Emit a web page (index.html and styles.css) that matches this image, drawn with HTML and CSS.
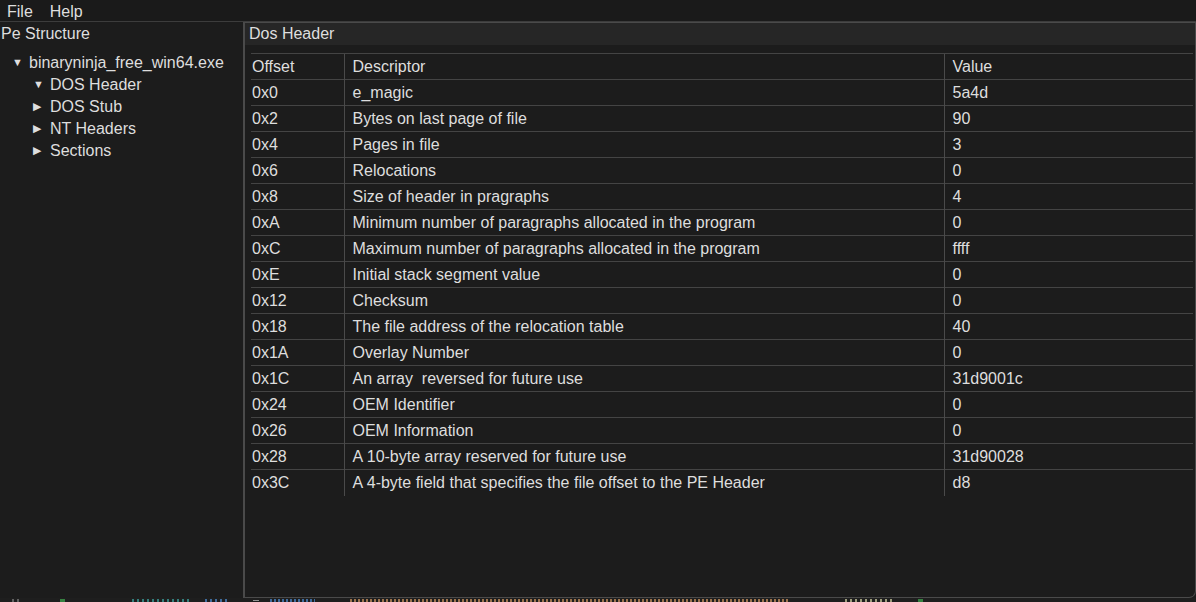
FILE: index.html
```html
<!DOCTYPE html>
<html>
<head>
<meta charset="utf-8">
<link rel="stylesheet" href="styles.css">
</head>
<body>
<div class="app">
  <div class="menubar">
    <span class="menu-item">File</span>
    <span class="menu-item">Help</span>
  </div>
  <div class="main">
    <div class="left-panel">
      <div class="left-title">Pe Structure</div>
      <ul class="tree">
        <li class="node open"><span class="arrow">▼</span>binaryninja_free_win64.exe
          <ul class="tree sub">
            <li class="node open"><span class="arrow">▼</span>DOS Header</li>
            <li class="node"><span class="arrow">▶</span>DOS Stub</li>
            <li class="node"><span class="arrow">▶</span>NT Headers</li>
            <li class="node"><span class="arrow">▶</span>Sections</li>
          </ul>
        </li>
      </ul>
    </div>
    <div class="window">
      <div class="win-title">Dos Header</div>
      <div class="win-body">
        <table class="grid">
          <colgroup><col class="c1"><col class="c2"><col class="c3"></colgroup>
          <thead>
            <tr><th>Offset</th><th>Descriptor</th><th>Value</th></tr>
          </thead>
          <tbody>
            <tr><td>0x0</td><td>e_magic</td><td>5a4d</td></tr>
            <tr><td>0x2</td><td>Bytes on last page of file</td><td>90</td></tr>
            <tr><td>0x4</td><td>Pages in file</td><td>3</td></tr>
            <tr><td>0x6</td><td>Relocations</td><td>0</td></tr>
            <tr><td>0x8</td><td>Size of header in pragraphs</td><td>4</td></tr>
            <tr><td>0xA</td><td>Minimum number of paragraphs allocated in the program</td><td>0</td></tr>
            <tr><td>0xC</td><td>Maximum number of paragraphs allocated in the program</td><td>ffff</td></tr>
            <tr><td>0xE</td><td>Initial stack segment value</td><td>0</td></tr>
            <tr><td>0x12</td><td>Checksum</td><td>0</td></tr>
            <tr><td>0x18</td><td>The file address of the relocation table</td><td>40</td></tr>
            <tr><td>0x1A</td><td>Overlay Number</td><td>0</td></tr>
            <tr><td>0x1C</td><td>An array&nbsp; reversed for future use</td><td>31d9001c</td></tr>
            <tr><td>0x24</td><td>OEM Identifier</td><td>0</td></tr>
            <tr><td>0x26</td><td>OEM Information</td><td>0</td></tr>
            <tr><td>0x28</td><td>A 10-byte array reserved for future use</td><td>31d90028</td></tr>
            <tr class="last"><td>0x3C</td><td>A 4-byte field that specifies the file offset to the PE Header</td><td>d8</td></tr>
          </tbody>
        </table>
      </div>
    </div>
  </div>
  <div class="underlay">
    <span class="frag g1"></span><span class="frag g2"></span><span class="frag g3"></span><span class="frag g4"></span><span class="frag g5"></span><span class="frag g6"></span><span class="frag g7"></span><span class="frag g8"></span><span class="frag g9"></span>
  </div>
</div>
</body>
</html>
```
FILE: styles.css
```css
* { box-sizing: border-box; }
html, body {
  margin: 0;
  padding: 0;
  background: #1c1c1c;
  width: 1196px;
  height: 602px;
  overflow: hidden;
}
body {
  font-family: "Liberation Sans", Arial, sans-serif;
  font-size: 16px;
  color: #dedede;
}
.app {
  display: flex;
  flex-direction: column;
  height: 602px;
}
.menubar {
  height: 22px;
  display: flex;
  gap: 17px;
  padding-left: 7px;
  padding-top: 2px;
  align-items: center;
  background: #1a1a1a;
  border-bottom: 1px solid #3c3c3c;
  line-height: 20px;
}
.main {
  flex: 1;
  display: flex;
  min-height: 0;
}
.left-panel {
  width: 245px;
  border-right: 2px solid #4a4a4a;
  background: #1c1c1c;
}
.left-title {
  height: 22px;
  line-height: 24px;
  padding-left: 1px;
}
.tree {
  list-style: none;
  margin: 0;
  padding: 0;
}
.left-panel > .tree {
  padding-left: 12px;
  padding-top: 8px;
}
.tree.sub {
  padding-left: 21px;
}
.node {
  line-height: 22px;
}
.arrow {
  display: inline-block;
  width: 17px;
  font-size: 11px;
  vertical-align: top;
  line-height: 21px;
}
.window {
  flex: 1;
  border: 1px solid #4a4a4a;
  border-left: none;
  border-radius: 0 0 7px 0;
  background: #1c1c1c;
  display: flex;
  flex-direction: column;
  overflow: hidden;
}
.win-title {
  height: 22px;
  line-height: 22px;
  padding-left: 4px;
  background: #262626;
}
.win-body {
  padding: 8px 0 0 6px;
}
.grid {
  border-collapse: collapse;
  width: 942px;
  table-layout: fixed;
}
.c1 { width: 93px; }
.c2 { width: 600px; }
.c3 { width: 249px; }
.grid th, .grid td {
  font-weight: normal;
  text-align: left;
  height: 26px;
  padding: 0 0 0 8px;
  border-top: 1px solid #444;
  border-left: 1px solid #4a4a4a;
  white-space: nowrap;
  vertical-align: middle;
}
.grid th:first-child, .grid td:first-child {
  border-left: none;
  padding-left: 1px;
}
.underlay {
  height: 4px;
  position: relative;
  background: #1e1e1e;
  overflow: hidden;
}
.frag {
  position: absolute;
  top: 1px;
  height: 3px;
  opacity: 0.75;
}
.g1 { left: 12px; width: 10px; background: repeating-linear-gradient(90deg, #777 0 2px, transparent 2px 5px); }
.g2 { left: 60px; width: 5px; background: #3fa34d; }
.g3 { left: 132px; width: 60px; background: repeating-linear-gradient(90deg, #3a9e9a 0 2px, transparent 2px 5px); }
.g4 { left: 205px; width: 25px; background: repeating-linear-gradient(90deg, #4a86c8 0 2px, transparent 2px 5px); }
.g5 { left: 253px; width: 6px; background: #bbb; height: 1px; top: 2px; }
.g6 { left: 270px; width: 45px; background: repeating-linear-gradient(90deg, #4a86c8 0 2px, transparent 2px 4px); }
.g7 { left: 350px; width: 440px; background: repeating-linear-gradient(90deg, #c8915d 0 2px, transparent 2px 4px); }
.g8 { left: 845px; width: 50px; background: repeating-linear-gradient(90deg, #c8c89e 0 2px, transparent 2px 5px); }
.g9 { left: 918px; width: 5px; background: #3fa34d; }
```
